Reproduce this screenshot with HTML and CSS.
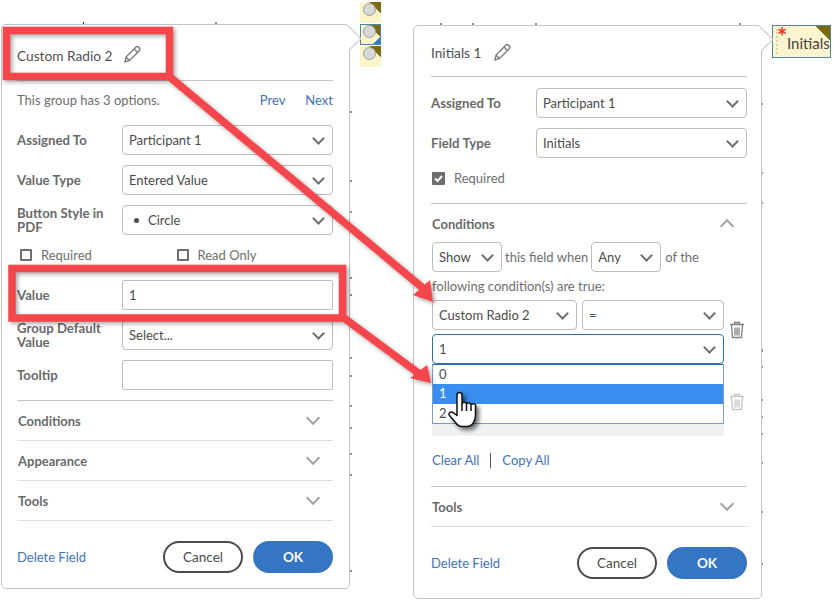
FILE: index.html
```html
<!DOCTYPE html>
<html lang="en">
<head>
    <meta charset="UTF-8">
    <title>Field properties</title>
    <link rel="stylesheet" href="styles.css">
</head>
<body>
    <svg class="doc-marks" width="833" height="602" viewBox="0 0 833 602">
        <path d="M83.500 22v2M216 22v2M440 24h2M472 24h2M535 24h2M740 23v2M351 111v2M351 180v2M351 211v2M351 277v2M351 294v2M351 357v2M351 375v2M351 405v2M351 427v2M351 453v2M351 474v2M351 570v2M762 103v2M762 172v2M762 202v2M762 349v3M762 366v2M762 399v2M762 416v2M762 433v2M762 462v2M762 511v2M762 563v2"/>
    </svg>

    <div class="radio-fields">
        <div class="radio-field"><span class="radio-dot"></span></div>
        <div class="radio-field selected"><span class="radio-dot"></span></div>
        <div class="radio-field"><span class="radio-dot"></span></div>
    </div>
    <div class="initials-field"><span class="star">*</span>Initials</div>

    <!-- left panel -->
    <div class="panel panel-left">
        <div class="panel-head">
            <span>Custom Radio 2</span>
            <svg class="pencil" width="18" height="18" viewBox="0 0 18 18"><path d="M2 16l1-5L12.500 1.500c1-1 2.500-1 3.500 0s1 2.500 0 3.500L6.500 14.500zM3 11l3.500 3.500M11 3l4 4"/></svg>
        </div>
        <div class="group-note">
            <span>This group has 3 options.</span>
            <span class="group-links"><a>Prev</a><a>Next</a></span>
        </div>
        <div class="row"><label>Assigned To</label><div class="select">Participant 1</div></div>
        <div class="row"><label>Value Type</label><div class="select">Entered Value</div></div>
        <div class="row"><label>Button Style in PDF</label><div class="select"><span class="bullet"></span>Circle</div></div>
        <div class="checks">
            <span class="check-item"><span class="checkbox"></span>Required</span>
            <span class="check-item"><span class="checkbox"></span>Read Only</span>
        </div>
        <div class="row"><label>Value</label><div class="input">1</div></div>
        <div class="row"><label>Group Default Value</label><div class="select">Select...</div></div>
        <div class="row"><label>Tooltip</label><div class="input"></div></div>
        <div class="section first">Conditions<span class="chev"></span></div>
        <div class="section">Appearance<span class="chev"></span></div>
        <div class="section">Tools<span class="chev"></span></div>
        <div class="panel-foot">
            <a>Delete Field</a>
            <span class="buttons"><span class="btn">Cancel</span><span class="btn primary">OK</span></span>
        </div>
    </div>

    <!-- right panel -->
    <div class="panel panel-right">
        <div class="panel-head">
            <span>Initials 1</span>
            <svg class="pencil" width="18" height="18" viewBox="0 0 18 18"><path d="M2 16l1-5L12.500 1.500c1-1 2.500-1 3.500 0s1 2.500 0 3.500L6.500 14.500zM3 11l3.500 3.500M11 3l4 4"/></svg>
        </div>
        <div class="row top-row"><label>Assigned To</label><div class="select">Participant 1</div></div>
        <div class="row"><label>Field Type</label><div class="select">Initials</div></div>
        <div class="checks single">
            <span class="check-item"><span class="checkbox checked">
                <svg width="11" height="11" viewBox="0 0 11 11"><path d="M2 5.500l2.500 2.500L9 3"/></svg>
            </span>Required</span>
        </div>
        <div class="section open">Conditions<span class="chev up"></span></div>
        <div class="cond-line">
            <div class="select small">Show</div>
            <span>this field when</span>
            <div class="select small">Any</div>
            <span>of the</span>
        </div>
        <div class="cond-text">following condition(s) are true:</div>
        <div class="cond">
            <div class="cond-fields">
                <div class="cond-pair">
                    <div class="select">Custom Radio 2</div>
                    <div class="select">=</div>
                </div>
                <div class="select focused">1</div>
            </div>
            <svg class="trash" width="16" height="18" viewBox="0 0 16 18"><path d="M1 3.500h14M5.500 3V1.500h5V3M2.500 4l1 12.500h9l1-12.500M6 6.500v8M8 6.500v8M10 6.500v8"/></svg>
        </div>
        <div class="cond second">
            <div class="cond-fields gray">
                <ul class="menu">
                    <li>0</li>
                    <li class="active">1</li>
                    <li>2</li>
                </ul>
            </div>
            <svg class="trash faded" width="16" height="18" viewBox="0 0 16 18"><path d="M1 3.500h14M5.500 3V1.500h5V3M2.500 4l1 12.500h9l1-12.500M6 6.500v8M8 6.500v8M10 6.500v8"/></svg>
        </div>
        <div class="cond-links"><a>Clear All</a><span class="sep"></span><a>Copy All</a></div>
        <div class="section first">Tools<span class="chev"></span></div>
        <div class="panel-foot">
            <a>Delete Field</a>
            <span class="buttons"><span class="btn">Cancel</span><span class="btn primary">OK</span></span>
        </div>
    </div>

    <!-- red callouts drawn over the screenshot -->
    <svg class="callouts" width="833" height="602" viewBox="0 0 833 602">
        <rect x="6.500" y="30.500" width="163" height="46"/>
        <rect x="12" y="268.500" width="330.500" height="49.500"/>
        <path d="M171 78L424 289"/>
        <path d="M344 318L421 375"/>
        <polygon points="433,302 413,295 430,280"/>
        <polygon points="431,383 410,378 427,365"/>
    </svg>

    <svg class="hand" width="833" height="602" viewBox="0 0 833 602">
        <path d="M457 395a2.500 2.500 0 0 1 5 0v9a2.300 2.300 0 0 1 4.500 .5a2.300 2.300 0 0 1 4.500 .8a2.300 2.300 0 0 1 4.500 1.700v8c0 6-3 11.500-9 11.500h-4.500c-3 0-4.500-1-6.500-4l-6-7c-1.500-2.500 1-4.500 3.500-3l4 3z"/>
        <path d="M462 404v7M466.500 405v6M471 406v5"/>
    </svg>
</body>
</html>
```

FILE: styles.css
```css
body {
    margin: 0;
    width: 833px;
    height: 602px;
    position: relative;
    overflow: hidden;
    background: white;
    font-family: Lato, "Open Sans", sans-serif;
    font-size: 13px;
    color: #4b4b4b;
}
a {
    color: #3f74b8;
}
.doc-marks {
    position: absolute;
    left: 0;
    top: 0;
}
.doc-marks path {
    stroke: #222;
    stroke-width: 1;
    fill: none;
}

/* fields on the document */
.radio-fields {
    position: absolute;
    left: 360px;
    top: 2px;
    display: flex;
    flex-direction: column;
    gap: 1px;
}
.radio-field {
    width: 21px;
    height: 21px;
    box-sizing: border-box;
    background: linear-gradient(225deg, #7a6a12 8px, #fbf3c9 8px);
    position: relative;
}
.radio-dot {
    position: absolute;
    left: 3px;
    top: 1px;
    width: 11px;
    height: 11px;
    border-radius: 50%;
    background: #d8d8d8;
    border: 1px solid #9a9a9a;
}
.radio-field.selected {
    outline: 1px solid #4f86a8;
    outline-offset: -1px;
    border: 1px solid #4f86a8;
}
.radio-field.selected .radio-dot {
    left: 2px;
    top: 0;
}
.radio-field.selected::after {
    content: "";
    position: absolute;
    right: 0;
    bottom: 0;
    border-style: solid;
    border-width: 0 0 7px 7px;
    border-color: transparent transparent #3a7bc4 transparent;
}
.initials-field {
    position: absolute;
    left: 772px;
    top: 25px;
    width: 59px;
    height: 33px;
    box-sizing: border-box;
    border: 1px solid #4f86a0;
    background: linear-gradient(225deg, #7a6a12 10px, #fbf4cf 10px);
    padding: 7px 0 0 14px;
    font-size: 15px;
    line-height: 20px;
    white-space: nowrap;
    color: #444;
}
.initials-field::before {
    content: "";
    position: absolute;
    left: 3px;
    top: 3px;
    bottom: 3px;
    border-left: 2px dotted #d8d4b0;
}
.star {
    position: absolute;
    left: 4px;
    top: 0;
    color: #e8392b;
    font-size: 24px;
    line-height: 22px;
    font-weight: bold;
}

/* panels */
.panel {
    position: absolute;
    box-sizing: border-box;
    background: white;
    border: 1px solid #c4c4c4;
    border-radius: 5px;
    padding: 0 16px 0 15px;
}
.panel::after {
    content: "";
    position: absolute;
    right: -9px;
    top: 5px;
    width: 16px;
    height: 16px;
    background: white;
    border-top: 1px solid #c4c4c4;
    border-right: 1px solid #c4c4c4;
    transform: rotate(45deg);
}
.panel-left {
    left: 1px;
    top: 24px;
    width: 349px;
    height: 565px;
}
.panel-right {
    left: 413px;
    top: 25px;
    width: 349px;
    height: 574px;
    padding-left: 17px;
    padding-right: 14px;
}
.panel-head {
    display: flex;
    align-items: center;
    gap: 11px;
    height: 50px;
    padding-top: 5px;
    border-bottom: 1px solid #c4c4c4;
    font-size: 13.700px;
    color: #4f4f4f;
}
.panel-right .panel-head {
    height: 47px;
    padding-top: 3px;
}
.pencil path {
    fill: none;
    stroke: #7a7a7a;
    stroke-width: 1.400;
}
.group-note {
    display: flex;
    justify-content: space-between;
    align-items: center;
    height: 38px;
    padding-bottom: 6px;
    color: #6e6e6e;
}
.group-links {
    display: flex;
    gap: 20px;
}
.row {
    display: grid;
    grid-template-columns: 105px 211px;
    align-items: center;
    height: 30px;
    margin-bottom: 10px;
}
.top-row {
    margin-top: 11px;
}
.row label {
    font-size: 13.200px;
    font-weight: bold;
    color: #6a6a6a;
    line-height: 14px;
}
.select, .input {
    box-sizing: border-box;
    height: 30px;
    line-height: 28px;
    padding-left: 6px;
    border: 1px solid #bcbcbc;
    background: white;
    white-space: nowrap;
}
.select {
    position: relative;
    border-radius: 4px;
}
.select::after {
    content: "";
    position: absolute;
    right: 9px;
    top: 8px;
    width: 7px;
    height: 7px;
    border-right: 2px solid #6e6e6e;
    border-bottom: 2px solid #6e6e6e;
    transform: rotate(45deg);
}
.input {
    border-radius: 2px;
}
.bullet {
    display: inline-block;
    width: 5px;
    height: 5px;
    border-radius: 50%;
    background: #4b4b4b;
    margin: 0 9px 2px 5px;
    vertical-align: middle;
}
.checks {
    display: flex;
    height: 20px;
    margin-bottom: 15px;
    padding-left: 3px;
    color: #6e6e6e;
}
.check-item {
    display: flex;
    align-items: center;
    gap: 9px;
    width: 158px;
}
.checkbox {
    box-sizing: border-box;
    width: 12px;
    height: 12px;
    border: 2px solid #6e6e6e;
    border-radius: 1px;
}
.checkbox.checked {
    display: flex;
    width: 13px;
    height: 13px;
    background: #6e6e6e;
    align-items: center;
    justify-content: center;
    border: 0;
}
.checkbox svg path {
    fill: none;
    stroke: white;
    stroke-width: 2;
}
.checks.single {
    padding-left: 1px;
}
.section {
    position: relative;
    height: 39px;
    line-height: 41px;
    padding-left: 1px;
    border-bottom: 1px solid #dedede;
    font-weight: bold;
    color: #6a6a6a;
}
.section.first {
    border-top: 1px solid #c4c4c4;
}
.section.open {
    height: 38px;
    line-height: 40px;
    border-top: 1px solid #c4c4c4;
    border-bottom: 0;
}
.chev {
    position: absolute;
    right: 15px;
    top: 12px;
    width: 8px;
    height: 8px;
    border-right: 2px solid #a3a3a3;
    border-bottom: 2px solid #a3a3a3;
    transform: rotate(45deg);
}
.chev.up {
    top: 17px;
    transform: rotate(225deg);
}
.panel-foot {
    display: flex;
    justify-content: space-between;
    align-items: center;
    height: 32px;
    margin-top: 20px;
}
.buttons {
    display: flex;
    gap: 10px;
}
.btn {
    box-sizing: border-box;
    width: 80px;
    height: 32px;
    line-height: 28px;
    text-align: center;
    border: 2px solid #4b4b4b;
    border-radius: 16px;
    font-size: 13.500px;
}
.btn.primary {
    background: #3476c3;
    border-color: #3476c3;
    color: white;
    font-weight: bold;
}

/* conditions */
.cond-line {
    display: flex;
    align-items: center;
    gap: 3px;
    height: 30px;
    padding-left: 1px;
    color: #6e6e6e;
}
.select.small {
    width: 70px;
    color: #4b4b4b;
    padding-left: 6px;
}
.cond-line span:last-child {
    margin-left: 1px;
}
.cond-text {
    height: 20px;
    line-height: 20px;
    margin: 4px 0;
    padding-left: 1px;
    color: #6e6e6e;
}
.cond {
    display: flex;
    align-items: center;
    gap: 5px;
    margin-left: 1px;
    height: 64px;
}
.cond-fields {
    width: 292px;
    position: relative;
}
.cond-pair {
    display: grid;
    grid-template-columns: 145px 142px;
    gap: 5px;
    margin-bottom: 4px;
}
.select.focused {
    border-color: #2f6ea8;
}
.trash {
    margin-top: -4px;
}
.trash path {
    fill: none;
    stroke: #808080;
    stroke-width: 1.300;
}
.trash.faded {
    margin-top: 4px;
}
.trash.faded path {
    stroke: #c6c6c6;
}
.cond.second {
    height: 72px;
}
.cond-fields.gray {
    height: 72px;
    background: #f0f0f0;
}
.menu {
    position: absolute;
    left: 0;
    top: 0;
    width: 292px;
    box-sizing: border-box;
    margin: 0;
    padding: 0;
    list-style: none;
    background: white;
    border: 1px solid #7d9cc8;
    border-top-color: #2f6ea8;
}
.menu li {
    height: 19.300px;
    line-height: 19.300px;
    padding-left: 6px;
}
.menu li.active {
    background: #3a8ef0;
    color: white;
}
.cond-links {
    display: flex;
    align-items: center;
    height: 20px;
    margin: 14px 0 16px;
    padding-left: 1px;
}
.sep {
    width: 1px;
    height: 15px;
    background: #555;
    margin: 0 11px;
}

/* overlays */
.callouts {
    position: absolute;
    left: 0;
    top: 0;
    filter: drop-shadow(2px 2px 2px rgba(0,0,0,0.35));
}
.callouts rect, .callouts path {
    fill: none;
    stroke: #f5474b;
    stroke-width: 7.500;
}
.callouts polygon {
    fill: #f5474b;
}
.hand {
    position: absolute;
    left: 0;
    top: 0;
    filter: drop-shadow(3px 3px 2px rgba(0,0,0,0.55));
}
.hand path {
    fill: white;
    stroke: #111;
    stroke-width: 1.500;
    stroke-linejoin: round;
}
```
